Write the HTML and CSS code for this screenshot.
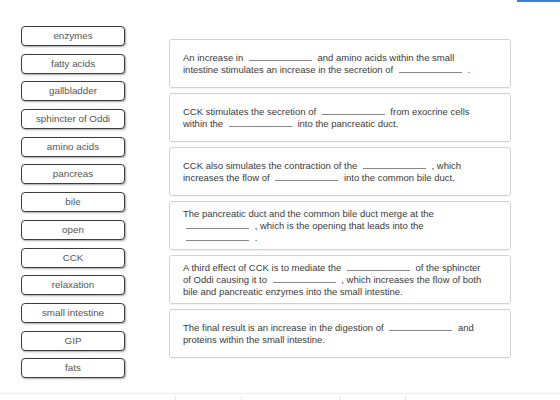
FILE: index.html
```html
<!DOCTYPE html>
<html lang="en">
<head>
    <meta charset="UTF-8">
    <title>Digestion - drag the labels</title>
    <link rel="stylesheet" href="styles.css">
</head>
<body>
    <div class="topbar"></div>

    <div class="activity">
        <div class="bank">
            <div class="tile">enzymes</div>
            <div class="tile">fatty acids</div>
            <div class="tile">gallbladder</div>
            <div class="tile">sphincter of Oddi</div>
            <div class="tile">amino acids</div>
            <div class="tile">pancreas</div>
            <div class="tile">bile</div>
            <div class="tile">open</div>
            <div class="tile">CCK</div>
            <div class="tile">relaxation</div>
            <div class="tile">small intestine</div>
            <div class="tile">GIP</div>
            <div class="tile">fats</div>
        </div>

        <div class="sentences">
            <div class="sentence">
                <p>An increase in <span class="blank"></span> and amino acids within the small intestine stimulates an increase in the secretion of <span class="blank"></span> .</p>
            </div>
            <div class="sentence">
                <p>CCK stimulates the secretion of <span class="blank"></span> from exocrine cells within the <span class="blank"></span> into the pancreatic duct.</p>
            </div>
            <div class="sentence">
                <p>CCK also simulates the contraction of the <span class="blank"></span> , which increases the flow of <span class="blank"></span> into the common bile duct.</p>
            </div>
            <div class="sentence">
                <p>The pancreatic duct and the common bile duct merge at the <br><span class="blank"></span> , which is the opening that leads into the <br><span class="blank"></span> .</p>
            </div>
            <div class="sentence">
                <p>A third effect of CCK is to mediate the <span class="blank"></span> of the sphincter of Oddi causing it to <span class="blank"></span> , which increases the flow of both bile and pancreatic enzymes into the small intestine.</p>
            </div>
            <div class="sentence">
                <p>The final result is an increase in the digestion of <span class="blank"></span> and proteins within the small intestine.</p>
            </div>
        </div>
    </div>

    <div class="footer">
        <span class="tab tab-first"></span>
        <span class="tab"></span>
        <span class="tab"></span>
        <span class="tab"></span>
    </div>
</body>
</html>
```

FILE: styles.css
```css
* {
    box-sizing: border-box;
    margin: 0;
    padding: 0;
}

html, body {
    width: 560px;
    height: 400px;
    overflow: hidden;
}

body {
    font-family: 'Liberation Sans', Arial, sans-serif;
    font-size: 10px;
    color: #333;
    background: white;
    position: relative;
}

.topbar {
    position: absolute;
    top: 0;
    right: 0;
    width: 43px;
    height: 2px;
    background-color: #3b7fd6;
}

.activity {
    display: flex;
    align-items: flex-start;
    padding: 26px 0 0 21px;
}

/* label bank */
.bank {
    display: flex;
    flex-direction: column;
    gap: 7.7px;
    width: 104px;
}

.tile {
    height: 20px;
    line-height: 18px;
    font-size: 9.8px;
    text-align: center;
    color: #555;
    background: white;
    border: 1px solid #3c3c3c;
    border-radius: 4px;
    box-shadow: 1px 1px 2px rgba(0, 0, 0, 0.35);
}

/* sentences with drop targets */
.sentences {
    display: flex;
    flex-direction: column;
    gap: 5px;
    width: 342px;
    margin: 13px 0 0 44px;
}

.sentence {
    display: flex;
    align-items: center;
    height: 49px;
    padding: 0 13px;
    border: 1px solid #d2d2d2;
    border-radius: 3px;
    box-shadow: 0 1px 1px rgba(0, 0, 0, 0.05);
}

.sentence p {
    max-width: 302px;
    font-size: 9.5px;
    line-height: 12px;
    color: #3a3a3a;
}

.blank {
    display: inline-block;
    width: 63px;
    height: 9px;
    margin: 0 3px;
    border-bottom: 1px solid #888;
}

.footer {
    position: absolute;
    left: 0;
    right: 0;
    top: 393px;
    height: 7px;
    display: flex;
    border-top: 1px solid #eee;
}

.tab {
    width: 66px;
    height: 5px;
    margin-top: 2px;
    border-left: 1px solid #e6e6e6;
}

.tab-first {
    margin-left: 175px;
}

.tab:nth-child(2) {
    width: 98px;
}
```
